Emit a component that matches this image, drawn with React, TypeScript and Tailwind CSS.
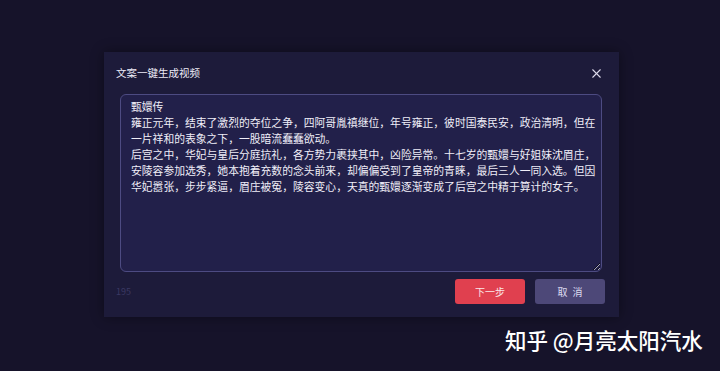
import { X } from "lucide-react";

const CONTENT = [
  "甄嬛传",
  "雍正元年，结束了激烈的夺位之争，四阿哥胤禛继位，年号雍正，彼时国泰民安，政治清明，但在",
  "一片祥和的表象之下，一股暗流蠢蠢欲动。",
  "后宫之中，华妃与皇后分庭抗礼，各方势力裹挟其中，凶险异常。十七岁的甄嬛与好姐妹沈眉庄，",
  "安陵容参加选秀，她本抱着充数的念头前来，却偏偏受到了皇帝的青睐，最后三人一同入选。但因",
  "华妃嚣张，步步紧逼，眉庄被冤，陵容变心，天真的甄嬛逐渐变成了后宫之中精于算计的女子。",
].join("\n");

export default function App() {
  return (
    <div
      className="relative h-[371px] w-[720px] overflow-hidden bg-[#16132a] pl-[104px] pt-[52px]"
      style={{ fontFamily: '"Noto Sans CJK SC", "Noto Sans", sans-serif' }}
    >
      <div className="flex h-[265px] w-[515px] flex-col bg-[#1d1b3a] shadow-[0_0_12px_rgba(0,0,0,0.4)]">
        <div className="flex h-[42px] items-center justify-between pl-3 pr-[15px]">
          <span className="text-[10.5px] text-[#eceaf6]">文案一键生成视频</span>
          <button aria-label="关闭" className="text-[#dcdaea]">
            <X size={15} strokeWidth={1.7} />
          </button>
        </div>
        <div className="px-4 pr-[17px]">
          <textarea
            readOnly
            wrap="off"
            value={CONTENT}
            className="block h-[178px] w-full resize-y overflow-hidden rounded-md border border-[#4d4b82] bg-[#22204a] pl-[10px] pr-2 pt-[3px] text-[10.8px] leading-[16px] text-[#f0eef8] outline-none"
          />
        </div>
        <div className="flex items-center justify-between pl-3 pr-[14px] pt-[7px]">
          <span className="text-[9px] text-[#3b3963]">195</span>
          <div className="flex gap-[10px]">
            <button className="h-[25px] w-[70px] rounded-[3px] bg-[#e0404f] text-[10px] text-[#fbe6e8]">
              下一步
            </button>
            <button className="flex h-[25px] w-[70px] items-center justify-center gap-[5px] rounded-[3px] bg-[#4d4878] text-[10px] text-[#dcdaf0]">
              <span>取</span>
              <span>消</span>
            </button>
          </div>
        </div>
      </div>
      <div className="absolute left-[505px] top-[326px] text-[21.5px] font-medium leading-[28px] text-white">
        知乎 @月亮太阳汽水
      </div>
    </div>
  );
}
